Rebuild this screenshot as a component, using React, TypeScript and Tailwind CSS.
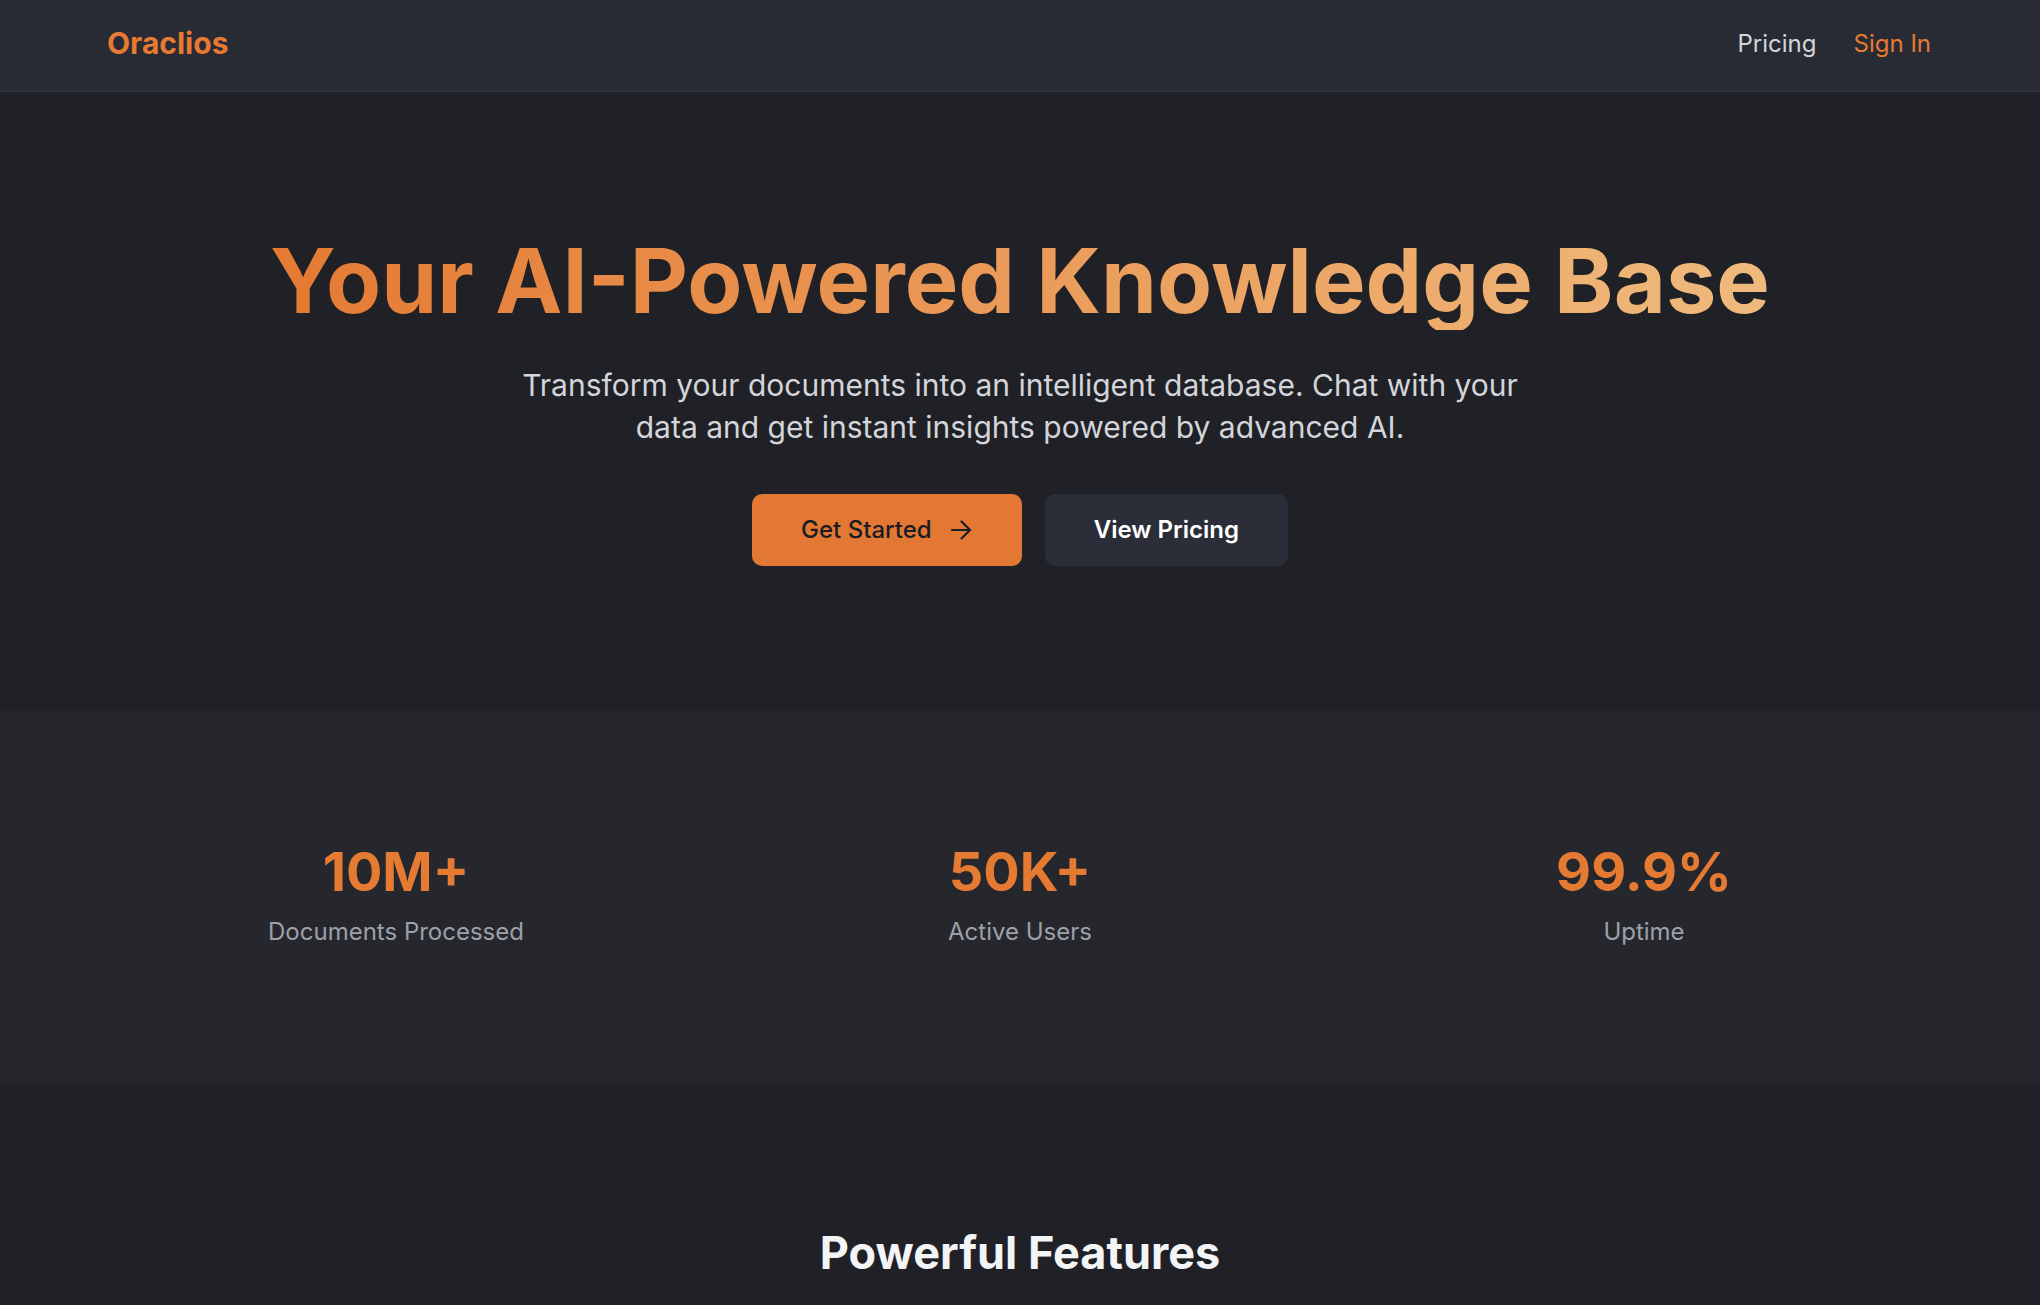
const STATS = [
  { value: "10M+", label: "Documents Processed" },
  { value: "50K+", label: "Active Users" },
  { value: "99.9%", label: "Uptime" },
];

function ArrowIcon() {
  return (
    <svg className="h-[22px] w-[22px]" viewBox="0 0 22 22" fill="none" stroke="currentColor" strokeWidth="2.2" strokeLinecap="round" strokeLinejoin="round" aria-hidden="true">
      <path d="M2 11h18M11.5 2.5 20 11l-8.5 8.5" />
    </svg>
  );
}

function Navbar() {
  return (
    <nav className="border-b border-[#30363f] bg-[#282b33]">
      <div className="flex h-[91px] items-center justify-between pb-[4px] pl-[107px] pr-[109px]">
        <span className="text-[30px] font-bold text-[#e67a32]">Oraclios</span>
        <div className="flex items-center gap-[37px] text-[24px]">
          <a className="text-[#d4d6db]">Pricing</a>
          <a className="text-[#e67a32]">Sign In</a>
        </div>
      </div>
    </nav>
  );
}

function Hero() {
  return (
    <section className="bg-[#202126] pb-[145px] pt-[139px] text-center">
      <h1 className="mx-auto w-fit bg-gradient-to-r from-[#e47a32] to-[#efba7c] bg-clip-text text-[90px] font-bold leading-[1.1] text-transparent">
        Your AI-Powered Knowledge Base
      </h1>
      <p className="mx-auto mt-[34px] max-w-[1040px] text-[30px] leading-[42px] text-[#d3d5da]">
        Transform your documents into an intelligent database. Chat with your data and get instant insights powered by
        advanced AI.
      </p>
      <div className="mt-[46px] flex justify-center gap-[23px]">
        <button className="flex h-[72px] items-center gap-[18px] rounded-[10px] bg-[#e27833] pl-[49px] pr-[50px] text-[24px] font-medium text-[#1c1d22]">
          Get Started
          <ArrowIcon />
        </button>
        <button className="flex h-[72px] items-center rounded-[10px] bg-[#2b2e39] px-[49px] text-[24px] font-semibold text-white">
          View Pricing
        </button>
      </div>
    </section>
  );
}

function Stats() {
  return (
    <section className="bg-[#26272d] pb-[135px] pt-[130px]">
      <div className="mx-auto grid w-[1872px] grid-cols-3">
        {STATS.map((stat) => (
          <div key={stat.label} className="flex flex-col items-center">
            <p className="text-[54px] font-bold leading-[62px] text-[#e57a32]">{stat.value}</p>
            <p className="mt-[13px] text-[24px] leading-[32px] text-[#9ca0aa]">{stat.label}</p>
          </div>
        ))}
      </div>
    </section>
  );
}

export default function App() {
  return (
    <div className="min-h-screen bg-[#202126] font-['Inter',sans-serif]">
      <Navbar />
      <Hero />
      <Stats />
      <section className="bg-[#202126] pb-[200px] pt-[143px]">
        <h2 className="text-center text-[45px] font-bold leading-[54px] text-[#f3f4f6]">Powerful Features</h2>
      </section>
    </div>
  );
}
